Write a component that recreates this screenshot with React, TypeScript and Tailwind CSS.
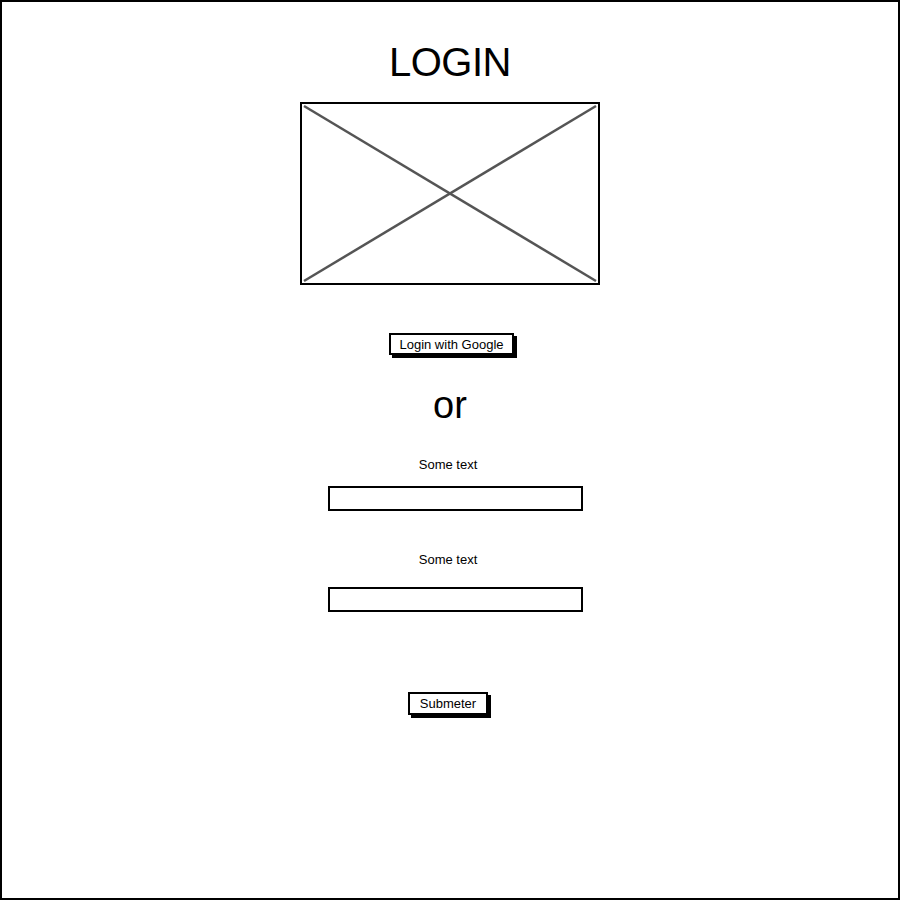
export default function App() {
  const font = { fontFamily: '"Liberation Sans", Arial, sans-serif' };

  return (
    <div
      className="w-[900px] h-[900px] bg-white border-2 border-black box-border flex flex-col items-center"
      style={font}
    >
      <h1 className="mt-[40px] text-[40px] leading-[40px] text-black tracking-[-0.5px]">LOGIN</h1>

      {/* image placeholder */}
      <div className="mt-[20px] w-[300px] h-[183px] border-2 border-black box-border">
        <svg className="block w-full h-full" viewBox="0 0 296 179" preserveAspectRatio="none">
          <line x1="2" y1="2" x2="294" y2="177" stroke="#555" strokeWidth="2.5" />
          <line x1="294" y1="2" x2="2" y2="177" stroke="#555" strokeWidth="2.5" />
        </svg>
      </div>

      <button className="mt-[48px] ml-[3px] w-[125px] h-[22px] border-2 border-black bg-white text-[13px] leading-none text-black shadow-[3px_3px_0_#000] flex items-center justify-center">
        Login with Google
      </button>

      <div className="mt-[31px] text-[38px] leading-[38px] text-black">or</div>

      <label className="mt-[33px] mr-[4px] text-[13px] leading-[16px] text-black">Some text</label>
      <input className="mt-[13px] ml-[10px] w-[255px] h-[25px] border-2 border-black bg-white outline-none" />

      <label className="mt-[41px] mr-[4px] text-[13px] leading-[16px] text-black">Some text</label>
      <input className="mt-[19px] ml-[10px] w-[255px] h-[25px] border-2 border-black bg-white outline-none" />

      <button className="mt-[80px] mr-[4px] w-[80px] h-[23px] border-2 border-black bg-white text-[13px] leading-none text-black shadow-[3px_3px_0_#000] flex items-center justify-center">
        Submeter
      </button>
    </div>
  );
}
